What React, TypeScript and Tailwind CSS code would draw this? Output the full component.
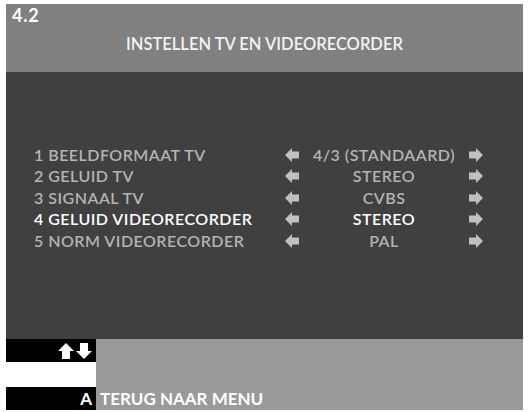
import React from "react";

const rows = [
  { label: "1 BEELDFORMAAT TV", value: "4/3 (STANDAARD)" },
  { label: "2 GELUID TV", value: "STEREO" },
  { label: "3 SIGNAAL TV", value: "CVBS" },
  { label: "4 GELUID VIDEORECORDER", value: "STEREO", active: true },
  { label: "5 NORM VIDEORECORDER", value: "PAL" },
];

function Arrow({ dir, className }: { dir: "left" | "right" | "up" | "down"; className?: string }) {
  const rot = { left: 0, right: 180, up: 90, down: 270 }[dir];
  return (
    <svg viewBox="0 0 12 12" className={className} style={{ transform: `rotate(${rot}deg)` }}>
      <path d="M0 6 L6 0 L6 3 L12 3 L12 9 L6 9 L6 12 Z" fill="currentColor" />
    </svg>
  );
}

export default function App() {
  return (
    <div
      className="w-[528px] h-[412px] bg-white pl-[6px] pt-[4px]"
      style={{ fontFamily: "Lato, 'Liberation Sans', sans-serif" }}
    >
      <div className="w-[517px] flex flex-col">
        <header className="h-[68px] bg-[#808080] flex flex-col">
          <div className="pl-[6px] pt-[3px] text-[18px] leading-[16px] font-bold tracking-[0.04em] text-white">4.2</div>
          <div className="mt-[11px] text-center text-[16.5px] leading-[20px] font-semibold text-[#f2f2f2]">
            INSTELLEN TV EN VIDEORECORDER
          </div>
        </header>

        <main className="h-[267px] bg-[#404040] pl-[28px] pt-[72px]">
          <div className="flex flex-col">
            {rows.map((r) => (
              <div
                key={r.label}
                className={`grid grid-cols-[251px_14px_170px_14px] items-center h-[21.5px] text-[16px] font-semibold tracking-[0.03em] ${
                  r.active ? "text-white" : "text-[#b4b4b4]"
                }`}
              >
                <span className="leading-none">{r.label}</span>
                <Arrow dir="left" className="w-[14px] h-[14px] text-[#c0c0c0]" />
                <span className="text-center leading-none">{r.value}</span>
                <Arrow dir="right" className="w-[14px] h-[14px] text-[#c0c0c0]" />
              </div>
            ))}
          </div>
        </main>

        <footer className="h-[71px] flex">
          <div className="w-[90px] flex flex-col">
            <div className="h-[23px] bg-black flex items-center justify-end gap-[2px] pr-[4px]">
              <Arrow dir="up" className="w-[16px] h-[16px] text-white" />
              <Arrow dir="down" className="w-[16px] h-[16px] text-white" />
            </div>
            <div className="h-[25px] bg-white" />
            <div className="h-[23px] bg-black flex items-center justify-end pr-[4px] text-[17px] font-bold text-white">
              A
            </div>
          </div>
          <div className="flex-1 bg-[#9a9a9a] flex items-end pl-[4px] pb-[1px] text-[17px] leading-[21px] font-bold text-white">
            TERUG NAAR MENU
          </div>
        </footer>
      </div>
    </div>
  );
}
